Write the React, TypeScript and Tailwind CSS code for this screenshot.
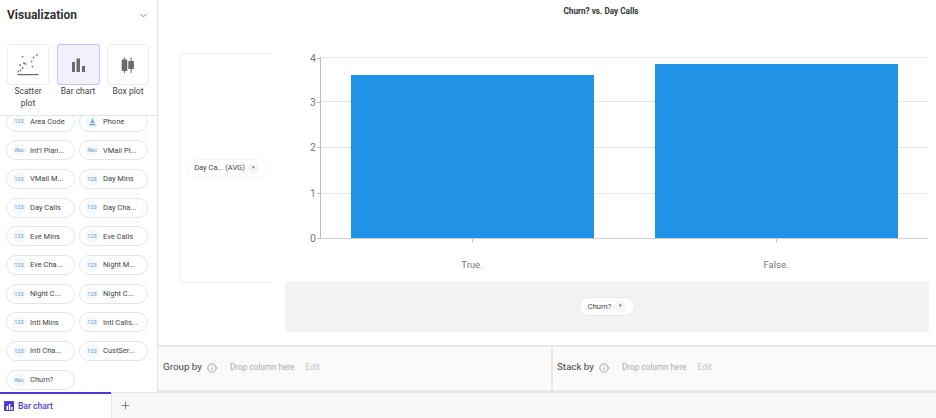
import { ChevronDown, Info, Plus } from "lucide-react";

const fields = [
  ["123", "Area Code"],
  ["geo", "Phone"],
  ["Abc", "Int'l Plan..."],
  ["Abc", "VMail Pl..."],
  ["123", "VMail M..."],
  ["123", "Day Mins"],
  ["123", "Day Calls"],
  ["123", "Day Cha..."],
  ["123", "Eve Mins"],
  ["123", "Eve Calls"],
  ["123", "Eve Cha..."],
  ["123", "Night M..."],
  ["123", "Night C..."],
  ["123", "Night C..."],
  ["123", "Intl Mins"],
  ["123", "Intl Calls..."],
  ["123", "Intl Cha..."],
  ["123", "CustSer..."],
  ["Abc", "Churn?"],
];

function ScatterIcon() {
  const dots = [
    [21.6, 56.6],
    [32.6, 57.5],
    [36, 55],
    [30.6, 61.6],
    [23, 63],
    [19, 65],
    [24.5, 64],
    [31.6, 66.6],
    [21.6, 68],
    [17.3, 71.6],
    [19.5, 70.5],
  ];
  return (
    <svg width="40" height="39" viewBox="7 45 40 39">
      {dots.map(([x, y], i) => (
        <circle key={i} cx={x} cy={y} r="0.9" fill="#777" />
      ))}
      <rect x="16.5" y="74" width="21" height="1.2" fill="#666" />
    </svg>
  );
}

function BarIcon() {
  return (
    <svg width="13" height="14" viewBox="71 57 13 14" fill="#6b6b6b">
      <rect x="71" y="61" width="3" height="10" />
      <rect x="75.5" y="57.5" width="3.5" height="13.5" />
      <rect x="81" y="65" width="3" height="6" />
    </svg>
  );
}

function BoxIcon() {
  return (
    <svg width="14" height="16" viewBox="121 56 14 16" fill="#6b6b6b">
      <rect x="121.7" y="58.5" width="5.6" height="11.5" rx="0.5" />
      <rect x="124" y="56.5" width="1" height="15.5" />
      <rect x="128.3" y="60" width="5.6" height="8" rx="0.5" />
      <rect x="130.6" y="56.5" width="1" height="15.5" />
    </svg>
  );
}

function ChartCard({ label, active, children }: { label: string; active?: boolean; children: React.ReactNode }) {
  return (
    <div className="flex w-[44px] flex-col items-center">
      <div
        className={
          active
            ? "flex h-[41px] w-[43px] items-center justify-center rounded-[3px] border border-[#c9c0f2] bg-[#f3f0fd]"
            : "flex h-[41px] w-[42px] items-center justify-center rounded-[3px] border border-[#eeeeee] bg-white"
        }
      >
        {children}
      </div>
      <div className="mt-[1px] w-[36px] text-center text-[8.5px] leading-[11.5px] text-[#444]">{label}</div>
    </div>
  );
}

function FieldPill({ kind, label }: { kind: string; label: string }) {
  return (
    <div className="flex h-[20px] items-center rounded-full border border-[#e4e4e4] bg-white pl-[5px]">
      <span className="flex h-[14px] w-[14px] shrink-0 items-center justify-center rounded-full bg-[#f6f8fb] text-[5.5px] font-medium text-[#6fa8e0]">
        {kind === "geo" ? (
          <svg width="7" height="8" viewBox="0 0 7 8" fill="#6fa8e0">
            <path d="M3.5 0 L5.6 5 L1.4 5 Z" />
            <rect x="0.5" y="5.8" width="6" height="1.6" />
          </svg>
        ) : (
          kind
        )}
      </span>
      <span className="ml-[4px] truncate text-[7.5px] text-[#444]">{label}</span>
    </div>
  );
}

function Sidebar() {
  return (
    <aside className="flex h-full w-[158px] shrink-0 flex-col overflow-hidden border-r border-[#e2e2e2] bg-white">
      <div className="relative z-10 h-[116px] shrink-0 border-b border-[#e4e4e4] bg-white">
        <div className="flex h-[30px] items-center justify-between pl-[7px] pr-[8px]">
          <span className="text-[12px] font-bold text-[#333]">Visualization</span>
          <ChevronDown size={11} className="text-[#777]" />
        </div>
        <div className="mt-[14px] flex gap-[6px] pl-[6px]">
          <ChartCard label="Scatter plot">
            <ScatterIcon />
          </ChartCard>
          <ChartCard label="Bar chart" active>
            <BarIcon />
          </ChartCard>
          <ChartCard label="Box plot">
            <BoxIcon />
          </ChartCard>
        </div>
      </div>
      <div className="-mt-[4.5px] grid grid-cols-[69px_69px] gap-x-[4px] gap-y-[8.7px] pl-[6px]">
        {fields.map(([kind, label], i) => (
          <FieldPill key={i} kind={kind} label={label} />
        ))}
      </div>
    </aside>
  );
}

function Chart() {
  const gridY = [57, 101, 147, 193];
  const labels = [
    [4, 58],
    [3, 102],
    [2, 147],
    [1, 193],
    [0, 238],
  ];
  return (
    <svg width="664" height="233" viewBox="272 48 664 233" className="block">
      {gridY.map((y) => (
        <line key={y} x1="320" x2="928" y1={y + 0.5} y2={y + 0.5} stroke="#e3e3e3" />
      ))}
      <rect x="351" y="75" width="243" height="163" fill="#2193e6" />
      <rect x="655" y="64" width="243" height="174" fill="#2193e6" />
      <line x1="320.5" x2="320.5" y1="57" y2="239" stroke="#bdbdbd" />
      <line x1="320" x2="928" y1="238.5" y2="238.5" stroke="#cfcfcf" />
      {labels.map(([v, y]) => (
        <g key={v}>
          <line x1="317" x2="320" y1={y + 0.5} y2={y + 0.5} stroke="#bdbdbd" />
          <text x="316" y={y + 3.5} textAnchor="end" fontSize="10.5" fill="#777">
            {v}
          </text>
        </g>
      ))}
      <line x1="472.5" x2="472.5" y1="239" y2="242" stroke="#bdbdbd" />
      <line x1="776.5" x2="776.5" y1="239" y2="242" stroke="#bdbdbd" />
      <text x="472" y="267.5" textAnchor="middle" fontSize="9.5" fill="#777">
        True.
      </text>
      <text x="776" y="267.5" textAnchor="middle" fontSize="9.5" fill="#777">
        False.
      </text>
    </svg>
  );
}

function DropRow({ label, className }: { label: string; className: string }) {
  return (
    <div className={className}>
      <span className="text-[9.8px] text-[#444]">{label}</span>
      <Info size={10} strokeWidth={1.3} className="ml-[5px] text-[#555]" />
      <span className="ml-[13px] text-[8.2px] text-[#aaa]">Drop column here</span>
      <span className="ml-[11px] text-[8.5px] text-[#c4c4c4]">Edit</span>
    </div>
  );
}

export default function App() {
  return (
    <div className="flex h-[418px] w-[936px] flex-col overflow-hidden bg-white font-['Roboto',sans-serif]">
      <div className="flex h-[392px] shrink-0">
        <Sidebar />
        <main className="flex min-w-0 flex-1 flex-col">
          <div className="h-[345px] shrink-0">
            <div className="h-[48px] pl-[108px] pt-[6px] text-center text-[8.2px] font-bold leading-[11px] text-[#333]">
              Churn? vs. Day Calls
            </div>
            <div className="flex">
              <div className="ml-[22px] mt-[5px] flex h-[230px] w-[92px] shrink-0 items-center justify-center rounded-l-[3px] border-y border-l border-[#f1f1f1]">
                <div className="flex h-[19px] w-[82px] items-center justify-center rounded-full border border-[#f6f6f6] text-[7.5px] text-[#444]">
                  Day Ca... (AVG)
                  <span className="ml-[3px] flex h-[11px] w-[11px] items-center justify-center rounded-full bg-[#f5f5f5] text-[4.5px] text-[#666]">
                    ▾
                  </span>
                </div>
              </div>
              <div className="flex flex-col">
                <Chart />
                <div className="ml-[13px] flex h-[51px] w-[644px] items-center justify-center rounded-[3px] bg-[#f3f3f3]">
                  <div className="flex h-[19px] w-[56px] items-center justify-center rounded-full border border-[#e6e6e6] bg-white text-[7.5px] text-[#444]">
                    Churn?
                    <span className="ml-[3px] flex h-[12px] w-[12px] items-center justify-center rounded-full bg-[#f5f5f5] text-[4.5px] text-[#666]">
                      ▾
                    </span>
                  </div>
                </div>
              </div>
            </div>
          </div>
          <div className="flex h-[47px] shrink-0 border-y-2 border-[#e8e8e8] bg-[#fafafa]">
            <DropRow label="Group by" className="flex w-[395px] items-center border-r-2 border-[#e8e8e8] pb-[2px] pl-[5px]" />
            <DropRow label="Stack by" className="flex flex-1 items-center pb-[2px] pl-[4px]" />
          </div>
        </main>
      </div>
      <div className="flex h-[26px] shrink-0 bg-[#f8f8f8]">
        <div className="flex w-[111px] items-center border-t-2 border-[#4f3bd1] bg-white pl-[4px]">
          <span className="flex h-[10px] w-[10px] items-center justify-center rounded-[1px] bg-[#4f3bd1]">
            <svg width="7" height="7" viewBox="0 0 7 7" fill="#fff">
              <rect x="0.5" y="3" width="1.5" height="4" />
              <rect x="2.8" y="1" width="1.5" height="6" />
              <rect x="5" y="4" width="1.5" height="3" />
            </svg>
          </span>
          <span className="ml-[4px] text-[8.5px] font-medium text-[#4f3bd1]">Bar chart</span>
        </div>
        <div className="flex flex-1 items-center border-l border-t border-[#e8e8e8] pl-[8px]">
          <Plus size={11} className="text-[#777]" />
        </div>
      </div>
    </div>
  );
}
